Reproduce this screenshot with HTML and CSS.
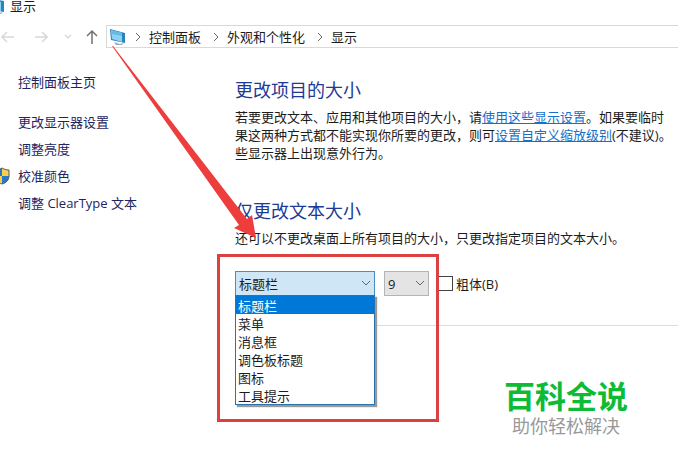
FILE: index.html
```html
<!DOCTYPE html>
<html lang="zh-CN">
<head>
<meta charset="utf-8">
<title>显示</title>
<link rel="stylesheet" href="styles.css">
</head>
<body>
<div class="window">
  <header class="titlebar">
    <svg class="title-icon" viewBox="0 0 18 18" aria-hidden="true"><path d="M1 1l15 3v11L2 12z" fill="#2685be"/><path d="M2 2l11 3v9L3 11z" fill="#8fd1f3"/><path d="M5 14l6 2 4-1-2 2H7z" fill="#9aabb9"/></svg>
    <span>显示</span>
  </header>
  <div class="navbar">
    <button class="nav-btn" aria-label="后退"><svg class="arrow-icon" viewBox="0 0 16 16"><path d="M14 8H2M7 3L2 8l5 5"/></svg></button>
    <button class="nav-btn next" aria-label="前进"><svg class="arrow-icon" viewBox="0 0 16 16"><path d="M1 8h12M8 3l5 5-5 5"/></svg></button>
    <button class="nav-btn recent" aria-label="最近位置"><svg class="chevron" viewBox="0 0 8 8"><path d="M1 2l3 3 3-3"/></svg></button>
    <button class="nav-btn up" aria-label="向上"><svg class="arrow-icon" viewBox="0 0 16 16"><path d="M8 15V2M3 7l5-5 5 5"/></svg></button>
    <nav class="address">
      <svg class="monitor" viewBox="0 0 18 18" aria-hidden="true"><path d="M1 1l15 4v10L2 12z" fill="#2685be"/><path d="M2 2l11 3v9L3 11z" fill="#8fd1f3"/><path d="M2 2l11 3v3L3 6z" fill="#69b9e6"/><path d="M5 14l6 2 4-1-2 2H7z" fill="#9aabb9"/></svg>
      <svg class="chevron sep" viewBox="0 0 8 8"><path d="M2 0l4 4-4 4"/></svg>
      <a href="#">控制面板</a>
      <svg class="chevron sep" viewBox="0 0 8 8"><path d="M2 0l4 4-4 4"/></svg>
      <a href="#">外观和个性化</a>
      <svg class="chevron sep" viewBox="0 0 8 8"><path d="M2 0l4 4-4 4"/></svg>
      <a href="#">显示</a>
    </nav>
  </div>
  <div class="body">
    <aside class="sidebar">
      <a class="home" href="#">控制面板主页</a>
      <a href="#">更改显示器设置</a>
      <a href="#">调整亮度</a>
      <a class="shielded" href="#"><svg class="shield" viewBox="0 0 16 18" aria-hidden="true"><path d="M8 1c2 1 4 2 7 2v6c0 4-3 7-7 8-4-1-7-4-7-8V3c3 0 5-1 7-2z" fill="#f6cf4e"/><path d="M8 1v8H1V3c3 0 5-1 7-2z" fill="#2878c8"/><path d="M8 9h7c0 4-3 7-7 8z" fill="#2878c8"/><path d="M8 1c2 1 4 2 7 2v6c0 4-3 7-7 8-4-1-7-4-7-8V3c3 0 5-1 7-2z" fill="none" stroke="#505a60"/></svg>校准颜色</a>
      <a href="#">调整 ClearType 文本</a>
    </aside>
    <main class="content">
      <h1>更改项目的大小</h1>
      <p>若要更改文本、应用和其他项目的大小，请<a href="#">使用这些显示设置</a>。如果要临时<br>果这两种方式都不能实现你所要的更改，则可<a href="#">设置自定义缩放级别</a>(不建议)。<br>些显示器上出现意外行为。</p>
      <h2>仅更改文本大小</h2>
      <p>还可以不更改桌面上所有项目的大小，只更改指定项目的文本大小。</p>
      <form class="controls">
        <div class="combo">
          <select class="field" aria-label="项目"><option>标题栏</option></select>
          <svg class="chevron drop" viewBox="0 0 8 8"><path d="M0 2l4 4 4-4"/></svg>
          <select class="menu" size="6" aria-label="项目列表">
            <option selected>标题栏</option>
            <option>菜单</option>
            <option>消息框</option>
            <option>调色板标题</option>
            <option>图标</option>
            <option>工具提示</option>
          </select>
        </div>
        <div class="combo size">
          <select class="field" aria-label="字号"><option>9</option></select>
          <svg class="chevron drop" viewBox="0 0 8 8"><path d="M0 2l4 4 4-4"/></svg>
        </div>
        <label class="bold"><input type="checkbox">粗体(B)</label>
        <span class="highlight"></span>
      </form>
      <hr>
    </main>
  </div>
  <svg class="pointer" viewBox="0 0 146 194" aria-hidden="true"><path d="M0 0L1 0 135 173 140 169 144 192 122 182 127 179z" fill="#ee3d3d"/></svg>
  <footer class="brand">
    <strong>百科全说</strong>
    <span>助你轻松解决</span>
  </footer>
</div>
</body>
</html>
```
FILE: styles.css
```css
* { box-sizing: border-box; }
body {
  margin: 0;
  background: #fff;
  color: #1c1c1c;
  font: 13px/18px "Open Sans", "Noto Sans CJK SC", sans-serif;
}
a { color: inherit; text-decoration: none; }
.window { position: relative; min-height: 100vh; overflow: hidden; }
.titlebar { display: flex; align-items: center; height: 25px; padding-bottom: 14px; }
.titlebar span { margin-left: 4px; }
.title-icon { width: 18px; height: 18px; margin-left: -12px; }
.navbar { display: flex; align-items: center; height: 23px; }
.nav-btn { display: flex; width: 16px; padding: 0; border: 0; background: none; color: #d8d8d8; }
.next { margin-left: 18px; }
.recent { width: 8px; margin-left: 14px; }
.up { margin: 0 6px 0 12px; color: #737373; }
.arrow-icon { width: 16px; height: 16px; }
.chevron { flex: none; width: 8px; height: 8px; overflow: visible; }
.arrow-icon, .chevron { fill: none; stroke: currentColor; stroke-width: 1.5; }
.address {
  flex: 1;
  display: flex;
  align-items: center;
  gap: 7px;
  height: 23px;
  padding-left: 2px;
  border: 1px solid #d9d9d9;
  border-right: 0;
}
.monitor { width: 18px; height: 18px; }
.sep { color: #666; stroke-width: 1; }
a + .sep { margin-left: 4px; }
.body { display: flex; }
.sidebar { display: flex; flex-direction: column; gap: 9px; width: 235px; padding: 25px 0 0 18px; color: #1e2560; }
.home { margin-bottom: 13px; }
.shielded { display: flex; align-items: center; gap: 5px; }
.shield { width: 16px; height: 18px; margin: 0 3px 0 -24px; }
.content { flex: 1; min-width: 0; padding-top: 29px; }
h1, h2 { margin: 0 0 5px; color: #1d3a94; font-size: 18px; font-weight: 400; line-height: 26px; }
h2 { margin-top: 36px; }
p { margin: 0; white-space: nowrap; }
p a { color: #1670c8; text-decoration: underline; }
.controls { position: relative; display: flex; align-items: center; gap: 9px; margin-top: 24px; }
.combo { position: relative; width: 140px; }
.size { width: 45px; }
select { font: inherit; color: #1c1c1c; border-radius: 0; outline: 0; }
.field { appearance: none; display: block; width: 100%; height: 25px; padding: 0 3px; border: 1px solid #4a8fc0; background: #cfe6f7; }
.size .field { border-color: #b4b4b4; background: #e4e4e4; }
.drop { position: absolute; right: 5px; top: 8px; color: #666; stroke-width: 1; }
.menu {
  position: absolute;
  top: 24px;
  left: 0;
  z-index: 1;
  width: 140px;
  height: 110px;
  padding: 0;
  overflow: hidden;
  border: 1px solid #2872ad;
  background: #fff;
  box-shadow: 2px 2px 1px #999;
}
.menu option { height: 18px; min-height: 18px; padding: 0 2px; line-height: 18px; }
.menu option:checked { background: #0078d7 linear-gradient(#0078d7, #0078d7); color: #fff; }
.bold { display: flex; align-items: center; gap: 3px; }
.bold input { appearance: none; width: 15px; height: 15px; margin: 0; border: 1px solid #444; background: #fff; }
.highlight { position: absolute; z-index: 2; left: -18px; top: -17px; width: 222px; height: 168px; border: 3px solid #dd4040; pointer-events: none; }
hr { margin: 29px 0 0; border: 0; border-top: 1px solid #ddd; }
.pointer { position: absolute; z-index: 3; left: 112px; top: 46px; width: 146px; height: 194px; }
.brand { display: flex; flex-direction: column; align-items: center; width: 126px; margin: 52px 49px 0 auto; color: #999; font-size: 18px; line-height: 24px; white-space: nowrap; }
.brand strong { color: #0dbb35; font-size: 31px; line-height: 36px; }
```
